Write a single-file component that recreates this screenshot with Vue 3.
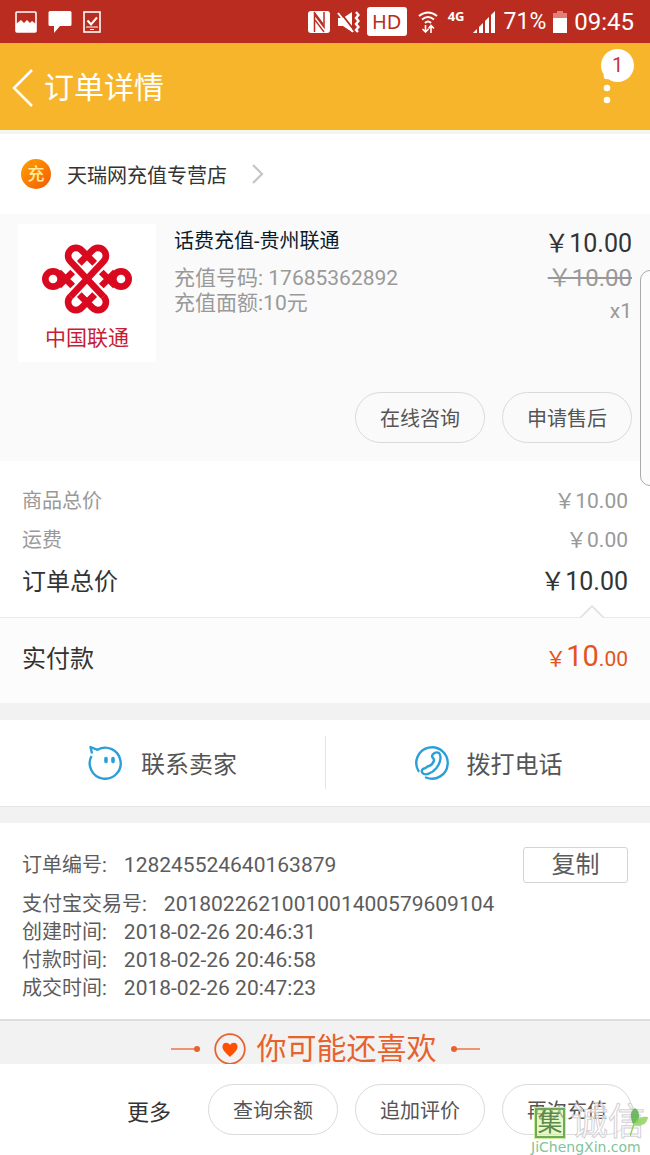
<script setup>
const details = ['充值号码: 17685362892', '充值面额:10元']
const totals = [
  { label: '商品总价', amount: '10.00' },
  { label: '运费', amount: '0.00' },
  { label: '订单总价', amount: '10.00', strong: true },
]
const records = [
  { label: '支付宝交易号:', value: '2018022621001001400579609104' },
  { label: '创建时间:', value: '2018-02-26 20:46:31' },
  { label: '付款时间:', value: '2018-02-26 20:46:58' },
  { label: '成交时间:', value: '2018-02-26 20:47:23' },
]
const actions = ['查询余额', '追加评价', '再次充值']
</script>

<template>
  <div class="page">
    <div class="status">
      <div class="status-left">
        <svg width="22" height="22" viewBox="0 0 22 22">
          <rect x="1" y="1" width="20" height="20" rx="1" fill="none" stroke="#fff" stroke-width="1.6" />
          <path d="M1 13l5-4 3 3 3-3 3 3 2-2 4 3v8H1z" fill="#fff" />
        </svg>
        <svg width="24" height="24" viewBox="0 0 24 24">
          <path d="M2 1h20q1.500 0 1.500 1.500v12q0 1.500-1.500 1.500H12l-6 7v-7H2Q.5 16 .5 14.500v-12Q.5 1 2 1z" fill="#fff" />
        </svg>
        <svg width="18" height="22" viewBox="0 0 18 22" fill="none" stroke="#fff" stroke-width="1.600">
          <rect x="1" y="1" width="16" height="20" />
          <path d="M4.500 9.500l3.500 4 6-7" stroke-width="2" />
          <path d="M3 16h12M7 18.500h4" stroke-width="1.200" />
        </svg>
      </div>
      <div class="status-right">
        <svg width="22" height="22" viewBox="0 0 22 22">
          <rect width="22" height="22" rx="3" fill="#fff" />
          <path d="M6.500 21V3.500L16 16V1" fill="none" stroke="#ba2c20" stroke-width="1.500" />
          <path d="M6 1l9 12M7 9l9 12" fill="none" stroke="#ba2c20" stroke-width="1.300" />
        </svg>
        <svg width="23" height="22" viewBox="0 0 23 22">
          <path d="M1 7h5l9-6v20l-9-6H1z" fill="#fff" />
          <path d="M3 1l14 18" stroke="#ba2c20" stroke-width="2" />
          <path d="M1 2l15 19" stroke="#fff" stroke-width="2" />
          <path d="M19 1l2.500 3-2.500 3 2.500 3-2.500 3 2.500 3-2.500 3 2 2" fill="none" stroke="#fff" stroke-width="2.400" />
        </svg>
        <span class="hd">HD</span>
        <svg width="20" height="22" viewBox="0 0 20 22" fill="none" stroke="#fff" stroke-width="2">
          <path d="M1 5q9-7 18 0M4 8.500q6-5 12 0M7 12q3-3 6 0" />
          <path d="M7.500 14v7M4.500 18l3 3 3-3M13 22v-7M10.500 17.500l2.500-3 3 3" stroke-width="1.600" />
        </svg>
        <span class="net">4G</span>
        <svg class="signal" width="22" height="22" viewBox="0 0 22 22" fill="#fff">
          <path d="M0 22l4-4v4zM6 16l4-4v10H6zM12 10l4-4v16h-4zM18 4l4-4v22h-4z" />
        </svg>
        <span class="pct">71%</span>
        <svg width="14" height="22" viewBox="0 0 14 22">
          <path d="M4 0h6v2h4v6H0V2h4z" fill="#e37f79" />
          <path d="M0 7h14v15H0z" fill="#fff" />
        </svg>
        <span class="clock">09:45</span>
      </div>
    </div>

    <header class="header">
      <button class="back" aria-label="返回">
        <svg width="22" height="40" viewBox="0 0 22 40"><path d="M20 2L2 20l18 18" fill="none" stroke="#fff" stroke-width="2.500" /></svg>
      </button>
      <h1>订单详情</h1>
      <button class="menu" aria-label="菜单">
        <svg width="8" height="32" viewBox="0 0 8 32" fill="#fff"><circle cx="4" cy="4" r="3.300" /><circle cx="4" cy="16" r="3.300" /><circle cx="4" cy="28" r="3.300" /></svg>
        <span class="badge">1</span>
      </button>
    </header>

    <a class="store" href="#">
      <span class="store-logo">充</span>
      <span>天瑞网充值专营店</span>
      <svg width="14" height="22" viewBox="0 0 14 22"><path d="M2 2l9 9-9 9" fill="none" stroke="#c4c4c4" stroke-width="2.200" /></svg>
    </a>

    <section class="product">
      <div class="item">
        <div class="thumb">
          <svg width="96" height="76" viewBox="0 0 288 228" fill="none" stroke="#d9091f" stroke-width="20">
            <path d="M194 170L94 64A23.500 23.500 0 0 1 128 31L167 70" />
            <path d="M94 170L194 64A23.500 23.500 0 0 0 160 31L121 70" />
            <path d="M194 170A23.500 23.500 0 0 1 160 203L121 164M94 170A23.500 23.500 0 0 0 128 203L167 164" />
            <circle cx="42" cy="117" r="23" />
            <circle cx="246" cy="117" r="23" />
            <path d="M59 96L101 138M59 138L101 96M229 96L187 138M229 138L187 96" />
          </svg>
          <span>中国联通</span>
        </div>
        <div class="desc">
          <h2>话费充值-贵州联通</h2>
          <p v-for="d in details" :key="d">{{ d }}</p>
        </div>
        <div class="prices">
          <span class="now">￥10.00</span>
          <s>￥10.00</s>
          <span class="count">x1</span>
        </div>
      </div>
      <div class="buttons">
        <button class="pill">在线咨询</button>
        <button class="pill">申请售后</button>
      </div>
    </section>

    <dl class="totals">
      <div v-for="t in totals" :key="t.label" :class="{ strong: t.strong }">
        <dt>{{ t.label }}</dt>
        <dd>￥{{ t.amount }}</dd>
      </div>
      <svg class="notch" width="24" height="13" viewBox="0 0 24 13"><path d="M0 13L12 1l12 12" fill="#fcfcfc" stroke="#dedede" stroke-width="1.500" /></svg>
    </dl>
    <div class="paid">
      <span>实付款</span>
      <span class="sum">￥<b>10</b>.00</span>
    </div>

    <div class="contact">
      <button>
        <svg width="35" height="35" viewBox="0 0 35 35" fill="none" stroke="#2a9fd8" stroke-width="2.400" stroke-linejoin="round">
          <path d="M3.500 11A15.500 15.500 0 1 0 9.500 4.800L2.500 2 4 8.500" />
          <path d="M18 13.500v3M25 13.500v3" stroke-width="3.600" stroke-linecap="round" />
        </svg>
        联系卖家
      </button>
      <button>
        <svg width="35" height="35" viewBox="0 0 35 35" fill="none" stroke="#2a9fd8" stroke-width="2.400" stroke-linecap="round">
          <path d="M4.500 26A15.700 15.700 0 1 1 12 32.500" />
          <path d="M10 23.500C8 24 7 26.500 8.500 28C11 31 18 28.500 22.500 23C27 17 27.500 10.500 25 8C22.500 6.500 18.500 8 18 11C18 13 20.500 13.500 20 15.500C19 18.500 17 20.500 15 21C13 21 12.500 23.500 10 23.500z" />
        </svg>
        拨打电话
      </button>
    </div>

    <section class="info">
      <div class="record first">
        <span>订单编号:</span><span class="value">128245524640163879</span>
        <button class="copy">复制</button>
      </div>
      <div v-for="r in records" :key="r.label" class="record">
        <span>{{ r.label }}</span><span class="value">{{ r.value }}</span>
      </div>
    </section>

    <div class="recommend">
      <svg width="30" height="8" viewBox="0 0 30 8"><path d="M0 4h26" stroke="#e8622e" stroke-width="1.300" /><circle cx="26" cy="4" r="3" fill="#e8622e" /></svg>
      <svg class="heart" width="32" height="32" viewBox="0 0 32 32">
        <circle cx="16" cy="16" r="14.800" fill="none" stroke="#e8622e" stroke-width="1.800" />
        <path d="M16 24C12 20 8 17 8.500 13C9 9 14 8.500 16 12C18 8.500 23 9 23.500 13C24 17 20 20 16 24z" fill="#ff5000" />
      </svg>
      <h2>你可能还喜欢</h2>
      <svg width="30" height="8" viewBox="0 0 30 8"><path d="M4 4h26" stroke="#e8622e" stroke-width="1.300" /><circle cx="4" cy="4" r="3" fill="#e8622e" /></svg>
    </div>

    <footer class="footer">
      <button class="more">更多</button>
      <button v-for="a in actions" :key="a" class="pill">{{ a }}</button>
      <div class="mark">
        <div class="mark-top">
          <span class="mark-box">集</span>
          <span class="mark-name">诚信</span>
          <svg class="leaf" width="18" height="30" viewBox="0 0 18 30">
            <path d="M3 17C-1 9 1 3 5 1C10 4 10 11 7 16z" fill="#58b04a" opacity=".85" />
            <path d="M4 18C6 11 12 9 18 10C17 17 12 20 4 18z" fill="#8fd35c" opacity=".85" />
            <path d="M4 17L0 29" stroke="#8fd35c" stroke-width="1.500" />
          </svg>
        </div>
        <div class="mark-url">JiChengXin.com</div>
      </div>
    </footer>

    <div class="edge"></div>
  </div>
</template>

<style>
body {
  background: #fff;
}
</style>

<style scoped>
.page {
  position: relative;
  overflow: hidden;
  font-family: Roboto, "Noto Sans CJK SC", sans-serif;
  font-size: 20px;
  color: #333;
  background: #fff;
}
h1, h2, p, dl, dd {
  margin: 0;
  font-weight: 400;
}
button {
  padding: 0;
  border: 0;
  background: none;
  font: inherit;
  color: inherit;
}
svg {
  display: block;
  flex: none;
}
.status {
  display: flex;
  justify-content: space-between;
  height: 43px;
  padding: 0 16px 0 15px;
  background: #ba2c20;
  color: #fff;
}
.status-left, .status-right {
  display: flex;
  align-items: center;
}
.status-left {
  gap: 11px;
}
.status-right {
  gap: 7px;
}
.hd {
  width: 40px;
  border-radius: 3px;
  background: #fff;
  color: #ba2c20;
  font: 20px/29px "Noto Sans", sans-serif;
  text-align: center;
}
.net {
  margin: 0 1px 10px 3px;
  font: 700 13px/13px "Noto Sans", sans-serif;
}
.hd + svg {
  margin-left: 4px;
}
.signal {
  margin-right: 2px;
}
.clock {
  font-size: 24px;
}
.pct {
  font-size: 23px;
}
.header {
  display: flex;
  align-items: center;
  height: 87px;
  padding: 2px 39px 0 12px;
  box-sizing: border-box;
  background: #f7b52c;
  color: #fff;
}
.header h1 {
  flex: 1;
  margin-left: 10px;
  font-size: 30px;
  line-height: 40px;
}
.menu {
  position: relative;
}
.badge {
  position: absolute;
  left: -2px;
  top: -23px;
  width: 33px;
  border-radius: 50%;
  background: #fff;
  color: #c9353c;
  font-size: 20px;
  line-height: 33px;
  text-align: center;
}
.store {
  display: flex;
  align-items: center;
  height: 80px;
  padding-left: 21px;
  border-top: 4px solid #f4f6f0;
  color: #333;
  text-decoration: none;
}
.store-logo {
  width: 30px;
  margin-right: 16px;
  border-radius: 50%;
  background: linear-gradient(135deg, #ffa200, #f45a05);
  color: #ffec9a;
  font-size: 17px;
  font-weight: 500;
  line-height: 30px;
  text-align: center;
}
.store svg {
  margin-left: 24px;
}
.product {
  padding: 10px 18px 18px;
  background: #fafafa;
}
.item {
  display: flex;
}
.thumb {
  display: flex;
  flex-direction: column;
  align-items: center;
  width: 138px;
  height: 138px;
  padding-top: 16px;
  box-sizing: border-box;
  background: #fff;
  color: #c81d35;
  font-size: 21px;
  line-height: 30px;
}
.thumb span {
  margin-top: 7px;
}
.desc {
  flex: 1;
  padding: 2px 0 0 18px;
  color: #999;
  line-height: 25px;
}
.desc h2 {
  margin-bottom: 10px;
  color: #0a1c2b;
  font-size: 20px;
  line-height: 30px;
}
.desc p {
  font-size: 21px;
}
.prices {
  display: flex;
  flex-direction: column;
  align-items: flex-end;
  padding-top: 3px;
  color: #999;
  font-size: 24px;
  line-height: 34px;
}
.now {
  color: #333;
  font-size: 25px;
}
.count {
  font-size: 21px;
  line-height: 32px;
}
.buttons {
  display: flex;
  justify-content: flex-end;
  gap: 17px;
  margin-top: 30px;
}
.pill {
  width: 130px;
  height: 51px;
  border: 1px solid #dadada;
  border-radius: 26px;
  color: #555;
  font-size: 20px;
}
.totals {
  position: relative;
  padding: 21px 22px 13px;
  border-bottom: 1px solid #eaeaea;
  color: #999;
  line-height: 39px;
}
.totals > div {
  display: flex;
  justify-content: space-between;
}
.totals dd {
  font-size: 21px;
}
.totals .strong {
  color: #333;
  font-size: 24px;
  line-height: 44px;
}
.totals .strong dd {
  font-size: 25px;
}
.notch {
  position: absolute;
  right: 46px;
  bottom: -1px;
}
.paid {
  display: flex;
  justify-content: space-between;
  padding: 1px 22px 4px;
  background: #fcfcfc;
  font-size: 24px;
  line-height: 80px;
}
.sum {
  color: #e4541c;
  font-size: 21px;
}
.sum b {
  font-size: 29px;
  font-weight: 400;
  line-height: 1;
}
.contact {
  display: grid;
  grid-template-columns: 1fr 1fr;
  padding: 16px 0 18px;
  border-top: 17px solid #f2f2f2;
  box-shadow: inset 0 -1px #e4e4e4;
}
.contact button {
  display: flex;
  align-items: center;
  justify-content: center;
  gap: 18px;
  height: 53px;
  color: #555;
  font-size: 24px;
}
.contact button + button {
  border-left: 1px solid #e4e4e4;
}
.info {
  padding: 24px 22px 17px;
  border-top: 16px solid #f2f2f2;
  color: #5c5c5c;
}
.record {
  display: flex;
  align-items: center;
  gap: 17px;
  line-height: 28px;
}
.record.first {
  margin-bottom: 7px;
}
.value {
  font-size: 21px;
}
.copy {
  width: 105px;
  height: 36px;
  margin-left: auto;
  border: 1px solid #d4d4d4;
  border-radius: 3px;
  font-size: 24px;
  line-height: 34px;
}
.recommend {
  display: flex;
  align-items: center;
  justify-content: center;
  height: 45px;
  padding-top: 12px;
  box-sizing: border-box;
  border-top: 2px solid #ddd;
  background: #f2f2f2;
  color: #e8622e;
}
.recommend .heart {
  margin: 0 11px 0 13px;
}
.recommend h2 {
  margin-right: 13px;
  font-size: 30px;
  line-height: 30px;
}
.footer {
  position: relative;
  display: flex;
  align-items: center;
  justify-content: flex-end;
  gap: 17px;
  padding: 20px 18px;
  background: #fff;
}
.more {
  margin-right: 20px;
  font-size: 22px;
}
.mark {
  position: absolute;
  right: 0;
  bottom: 0;
  width: 119px;
}
.mark-top {
  display: flex;
  align-items: center;
  padding-left: 4px;
}
.mark-box {
  width: 26px;
  border: 2px solid #71a95c;
  outline: 1px solid #cbed9c;
  background: rgba(214, 245, 160, 0.6);
  color: #5c8a4c;
  font-size: 25px;
  line-height: 26px;
  text-align: center;
}
.mark-name {
  margin-left: 6px;
  color: rgba(255, 255, 255, 0.7);
  font-size: 37px;
  line-height: 32px;
  -webkit-text-stroke: 1px #d5d0d5;
}
.leaf {
  position: absolute;
  right: 2px;
  top: 0;
}
.mark-url {
  color: #7fc49a;
  font: 14px/16px "DejaVu Sans", sans-serif;
}
.edge {
  position: absolute;
  right: -10px;
  top: 270px;
  width: 18px;
  height: 214px;
  border: 1px solid #aaa;
  border-radius: 10px;
  background: #fcfcfc;
}
</style>
